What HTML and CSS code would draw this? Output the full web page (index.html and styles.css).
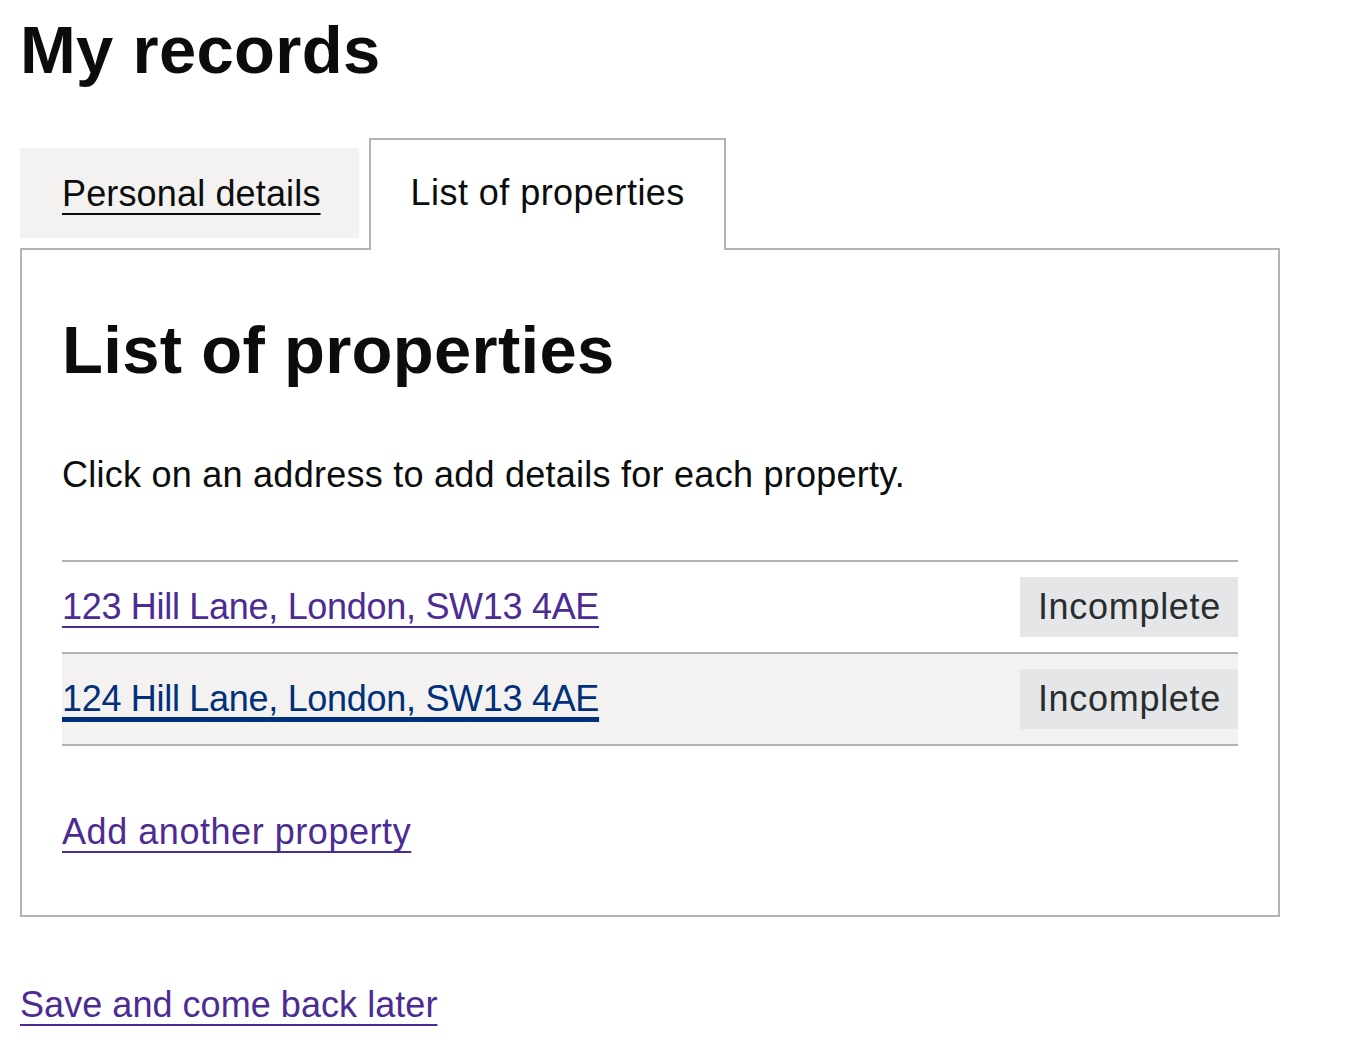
FILE: index.html
```html
<!DOCTYPE html>
<html lang="en">
<head>
<meta charset="utf-8">
<title>My records</title>
<link rel="stylesheet" href="styles.css">
</head>
<body>
<div class="page">
  <h1 class="heading">My records</h1>
  <div class="tabs">
    <ul class="tabs-list">
      <li class="tab"><a class="tab-link" href="#personal">Personal details</a></li>
      <li class="tab tab-selected"><a class="tab-link tab-link-selected" href="#properties">List of properties</a></li>
    </ul>
    <div class="panel" id="properties">
      <h2 class="heading panel-heading">List of properties</h2>
      <p class="body intro">Click on an address to add details for each property.</p>
      <ul class="rows">
        <li class="row">
          <a class="link visited row-link" href="#p1">123 Hill Lane, London, SW13 4AE</a>
          <span class="tag">Incomplete</span>
        </li>
        <li class="row row-hover">
          <a class="link hover row-link" href="#p2">124 Hill Lane, London, SW13 4AE</a>
          <span class="tag">Incomplete</span>
        </li>
      </ul>
      <p class="body add"><a class="link visited add-link" href="#add">Add another property</a></p>
    </div>
  </div>
  <p class="body save"><a class="link visited save-link" href="#save">Save and come back later</a></p>
</div>
</body>
</html>
```

FILE: styles.css
```css
html, body {
  margin: 0;
  padding: 0;
  background: #ffffff;
}
body {
  font-family: "Liberation Sans", Arial, sans-serif;
  color: #0b0c0c;
}
.page {
  padding: 10px 20px 0 20px;
  width: 1260px;
}
.heading {
  margin: 0;
  font-size: 67px;
  line-height: 80px;
  font-weight: 700;
  letter-spacing: 0.3px;
}
.tabs {
  margin-top: 48px;
}
.tabs-list {
  list-style: none;
  margin: 0;
  padding: 0;
  display: flex;
  align-items: flex-start;
  gap: 10px;
}
.tab {
  margin-top: 10px;
  height: 90px;
  box-sizing: border-box;
  padding: 22px 38px 0 42px;
  background: #f3f2f1;
  font-size: 36px;
  line-height: 48px;
  letter-spacing: 0.15px;
}
.tab-selected {
  position: relative;
  z-index: 1;
  margin-top: 0;
  margin-bottom: -2px;
  height: 112px;
  padding: 29px 39px 0 40px;
  background: #ffffff;
  border: 2px solid #b1b4b6;
  border-bottom: 0;
  letter-spacing: 0.45px;
}
.tab-link {
  color: #0b0c0c;
  text-decoration: underline;
  text-decoration-thickness: 2px;
  text-underline-offset: 7px;
}
.tab-link-selected {
  text-decoration: none;
}
.panel {
  border: 2px solid #b1b4b6;
  padding: 60px 40px 59px 40px;
}
.body {
  margin: 0;
  font-size: 36px;
  line-height: 48px;
  letter-spacing: 0.25px;
}
.intro {
  margin-top: 61px;
  margin-bottom: 61px;
}
.rows {
  list-style: none;
  margin: 0;
  padding: 0;
  border-top: 2px solid #b1b4b6;
}
.row {
  display: flex;
  align-items: center;
  justify-content: space-between;
  height: 92px;
  box-sizing: border-box;
  border-bottom: 2px solid #b1b4b6;
  font-size: 36px;
  line-height: 48px;
}
.row-hover {
  background: #f3f2f1;
}
.link {
  text-decoration: underline;
  text-decoration-thickness: 2px;
  text-underline-offset: 7px;
}
.row-link {
  letter-spacing: -0.3px;
}
.add-link {
  letter-spacing: 0.55px;
}
.save-link {
  letter-spacing: 0.05px;
}
.visited {
  color: #4c2c92;
}
.hover {
  color: #003078;
  text-decoration-thickness: 5px;
  text-underline-offset: 6px;
}
.tag {
  display: inline-block;
  padding: 6px 17px 6px 18px;
  background: #e5e6e7;
  color: #282d30;
  font-size: 36px;
  line-height: 48px;
  letter-spacing: 0.7px;
}
.add {
  margin-top: 62px;
}
.save {
  margin-top: 64px;
}
```
